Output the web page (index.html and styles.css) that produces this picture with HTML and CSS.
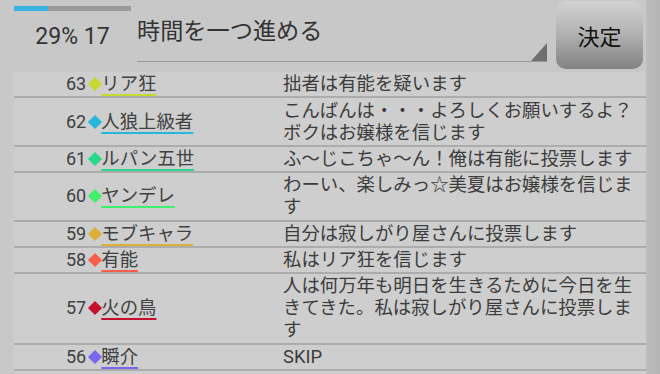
FILE: index.html
```html
<!doctype html>
<html lang="ja">
<head>
<meta charset="utf-8" />
<title>人狼 ログ</title>
<meta name="viewport" content="width=device-width, initial-scale=1" />
<link rel="stylesheet" href="styles.css">
</head>
<body>
  <div class="screen">
    <!-- 上部バー -->
    <div class="header">
      <div class="status">
        <div class="progress"><div class="fill"></div></div>
        <div class="count">29% 17</div>
      </div>
      <div class="field">
        <span class="field-text">時間を一つ進める</span>
        <span class="corner"></span>
      </div>
      <div class="ok">決定</div>
    </div>

    <!-- ログ -->
    <div class="log">
      <div class="row">
        <div class="who"><span class="num">63</span><span class="mark c63"></span><span class="name c63">リア狂</span></div>
        <div class="msg">拙者は有能を疑います</div>
      </div>
      <div class="row">
        <div class="who"><span class="num">62</span><span class="mark c62"></span><span class="name c62">人狼上級者</span></div>
        <div class="msg">こんばんは・・・よろしくお願いするよ？ボクはお嬢様を信じます</div>
      </div>
      <div class="row">
        <div class="who"><span class="num">61</span><span class="mark c61"></span><span class="name c61">ルパン五世</span></div>
        <div class="msg">ふ〜じこちゃ〜ん！俺は有能に投票します</div>
      </div>
      <div class="row">
        <div class="who"><span class="num">60</span><span class="mark c60"></span><span class="name c60">ヤンデレ</span></div>
        <div class="msg">わーい、楽しみっ☆美夏はお嬢様を信じます</div>
      </div>
      <div class="row">
        <div class="who"><span class="num">59</span><span class="mark c59"></span><span class="name c59">モブキャラ</span></div>
        <div class="msg">自分は寂しがり屋さんに投票します</div>
      </div>
      <div class="row">
        <div class="who"><span class="num">58</span><span class="mark c58"></span><span class="name c58">有能</span></div>
        <div class="msg">私はリア狂を信じます</div>
      </div>
      <div class="row">
        <div class="who"><span class="num">57</span><span class="mark c57"></span><span class="name c57">火の鳥</span></div>
        <div class="msg">人は何万年も明日を生きるために今日を生きてきた。私は寂しがり屋さんに投票します</div>
      </div>
      <div class="row">
        <div class="who"><span class="num">56</span><span class="mark c56"></span><span class="name c56">瞬介</span></div>
        <div class="msg">SKIP</div>
      </div>
    </div>
  </div>
</body>
</html>
```

FILE: styles.css
```css
*{margin:0;padding:0;box-sizing:border-box}
body{
  background:#c8c8c8;
  font-family:Roboto,"Noto Sans CJK JP",sans-serif;
  color:#404040;
}

.screen{
  width:660px;height:374px;overflow:hidden;
  display:flex;flex-direction:column;
  background:linear-gradient(to right,#c8c8c8 0,#c8c8c8 646px,#bdbdbd 646px,#b4b4b4 100%);
}

/* === 上部バー === */
.header{display:flex;height:72px;padding-left:14px;flex-shrink:0}
.status{width:117px;padding-top:6px}
.progress{height:5px;background:#9a9a9a}
.progress .fill{width:29%;height:100%;background:#38b2e0}
.count{margin-top:12px;font-size:23px;line-height:27px;text-align:center;color:#333}

.field{
  position:relative;
  width:410px;height:62px;margin-left:6px;
  border-bottom:1px solid #999;
}
.field-text{
  display:block;padding-top:16px;
  font-size:23.2px;line-height:30px;color:#333;
}
.corner{
  position:absolute;right:0;bottom:0;
  width:16px;height:18px;background:#6e6e6e;
  clip-path:polygon(100% 0,100% 100%,0 100%);
}

.ok{
  width:87px;height:68px;margin:1px 0 0 9px;
  border-radius:10px;
  background:linear-gradient(#d2d2d2,#b4b4b4 45%,#828282);
  display:flex;justify-content:center;align-items:center;
  font-size:22px;color:#111;
}

/* === ログ === */
.log{
  width:632px;margin-left:14px;flex:1;
  background:#cecece;
}
.row{
  display:grid;grid-template-columns:269px 1fr;
  padding:1.2px 0;border-bottom:2px solid #acacac;
  font-size:18.4px;line-height:22px;
}
.who{display:flex;align-items:center;padding-left:52px}
.num{font-size:18px}
.mark{width:10px;height:10px;margin:0 1px 0 4px;transform:rotate(45deg)}
.name{
  text-decoration:underline 2px;
  text-underline-offset:4px;
  text-decoration-skip-ink:none;
}
.msg{color:#3c3c3c}

.c63{text-decoration-color:#c4da32}.mark.c63{background:#c4da32}
.c62{text-decoration-color:#26b6dc}.mark.c62{background:#26b6dc}
.c61{text-decoration-color:#2ad88c}.mark.c61{background:#2ad88c}
.c60{text-decoration-color:#3ef06e}.mark.c60{background:#3ef06e}
.c59{text-decoration-color:#dcae3a}.mark.c59{background:#dcae3a}
.c58{text-decoration-color:#fb5e4a}.mark.c58{background:#fb5e4a}
.c57{text-decoration-color:#c4102c}.mark.c57{background:#c4102c}
.c56{text-decoration-color:#7a66ee}.mark.c56{background:#7a66ee}
```
